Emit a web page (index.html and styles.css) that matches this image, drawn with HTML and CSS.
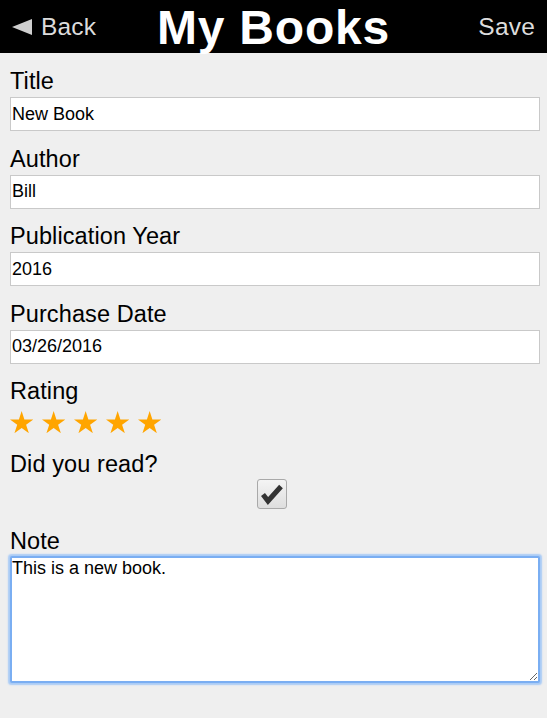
FILE: index.html
```html
<!DOCTYPE html>
<html lang="en">
<head>
<meta charset="utf-8">
<title>My Books</title>
<link rel="stylesheet" href="styles.css">
</head>
<body>
<header class="topbar">
  <div class="nav-left">
    <svg class="back-arrow" width="20" height="16" viewBox="0 0 20 16"><polygon points="0,8 20,0 20,16" fill="#cfcfcf"/></svg>
    <span class="nav-text">Back</span>
  </div>
  <h1 class="title">My Books</h1>
  <div class="nav-right"><span class="nav-text">Save</span></div>
</header>
<main class="form">
  <div class="field">
    <label class="label">Title</label>
    <input class="text-input" type="text" value="New Book">
  </div>
  <div class="field">
    <label class="label">Author</label>
    <input class="text-input" type="text" value="Bill">
  </div>
  <div class="field">
    <label class="label">Publication Year</label>
    <input class="text-input" type="text" value="2016">
  </div>
  <div class="field">
    <label class="label">Purchase Date</label>
    <input class="text-input" type="text" value="03/26/2016">
  </div>
  <div class="field field-rating">
    <label class="label">Rating</label>
    <div class="stars">
      <svg class="star" viewBox="0 0 100 95.1"><path d="M50 0 L61.8 36.33 L100 36.33 L69.1 58.78 L80.9 95.1 L50 72.65 L19.1 95.1 L30.9 58.78 L0 36.33 L38.2 36.33 Z"/></svg>
      <svg class="star" viewBox="0 0 100 95.1"><path d="M50 0 L61.8 36.33 L100 36.33 L69.1 58.78 L80.9 95.1 L50 72.65 L19.1 95.1 L30.9 58.78 L0 36.33 L38.2 36.33 Z"/></svg>
      <svg class="star" viewBox="0 0 100 95.1"><path d="M50 0 L61.8 36.33 L100 36.33 L69.1 58.78 L80.9 95.1 L50 72.65 L19.1 95.1 L30.9 58.78 L0 36.33 L38.2 36.33 Z"/></svg>
      <svg class="star" viewBox="0 0 100 95.1"><path d="M50 0 L61.8 36.33 L100 36.33 L69.1 58.78 L80.9 95.1 L50 72.65 L19.1 95.1 L30.9 58.78 L0 36.33 L38.2 36.33 Z"/></svg>
      <svg class="star" viewBox="0 0 100 95.1"><path d="M50 0 L61.8 36.33 L100 36.33 L69.1 58.78 L80.9 95.1 L50 72.65 L19.1 95.1 L30.9 58.78 L0 36.33 L38.2 36.33 Z"/></svg>
    </div>
  </div>
  <div class="field field-read">
    <label class="label">Did you read?</label>
    <div class="check-row">
      <span class="checkbox" role="checkbox" aria-checked="true">
        <svg width="30" height="30" viewBox="0 0 30 30"><polyline points="6,15.5 11,22 24,7.5" fill="none" stroke="#333" stroke-width="5" stroke-linejoin="miter"/></svg>
      </span>
    </div>
  </div>
  <div class="field field-note">
    <label class="label">Note</label>
    <textarea class="note">This is a new book.</textarea>
  </div>
</main>
</body>
</html>
```
FILE: styles.css
```css
html, body {
  margin: 0;
  padding: 0;
}
body {
  background: #efefef;
  font-family: "Liberation Sans", Arial, sans-serif;
  color: #000;
  width: 547px;
  height: 718px;
  overflow: hidden;
}
.topbar {
  height: 53px;
  background: #000;
  display: grid;
  grid-template-columns: 1fr auto 1fr;
  align-items: start;
  padding: 0 12px;
}
.nav-left {
  display: flex;
  align-items: center;
  height: 53px;
  padding-top: 1px;
  box-sizing: border-box;
}
.back-arrow {
  display: block;
  margin-right: 9px;
  margin-top: -1px;
}
.nav-right {
  display: flex;
  justify-content: flex-end;
  align-items: center;
  height: 53px;
  padding-top: 1px;
  box-sizing: border-box;
}
.nav-text {
  font-size: 24.5px;
  color: #dcdcdc;
  line-height: 28px;
  letter-spacing: 0.2px;
}
.title {
  margin: 0;
  font-size: 48px;
  font-weight: bold;
  color: #fff;
  line-height: 53px;
  padding-top: 1px;
  height: 53px;
  box-sizing: border-box;
  letter-spacing: 0.8px;
  white-space: nowrap;
}
.form {
  padding: 16px 7px 0 10px;
}
.field {
  margin-bottom: 15.6px;
}
.label {
  display: block;
  font-size: 23.5px;
  line-height: 24px;
  padding-bottom: 1px;
  letter-spacing: 0.1px;
}
.text-input {
  display: block;
  box-sizing: border-box;
  width: 100%;
  height: 34px;
  margin: 3px 0 0;
  padding: 0 1px;
  border: 1px solid #c9c9c9;
  border-radius: 0;
  background: #fff;
  font-family: "Liberation Sans", Arial, sans-serif;
  font-size: 18px;
  color: #000;
  outline: none;
}
.field-rating {
  margin-bottom: 18.6px;
}
.stars {
  display: flex;
  gap: 8.7px;
  margin-top: 6.6px;
  height: 22px;
}
.star {
  width: 23.3px;
  height: 22.2px;
  fill: #ffa500;
}
.field-read {
  margin-bottom: 20.5px;
}
.check-row {
  margin-top: 2.4px;
  height: 30px;
  padding-left: 246.5px;
}
.checkbox {
  display: block;
  width: 30px;
  height: 30px;
  box-sizing: border-box;
  border: 1px solid #a9a9a9;
  border-radius: 3px;
  background: linear-gradient(#f4f4f4, #dedede);
  position: relative;
}
.checkbox svg {
  display: block;
  margin: -1px 0 0 -1px;
}
.note {
  display: block;
  box-sizing: border-box;
  width: 100%;
  height: 127px;
  margin: 1.5px 0 0;
  padding: 0;
  border: 2px solid #7aaef2;
  border-radius: 2px;
  box-shadow: 0 0 1.5px 1.5px #a9cbf6;
  background: #fff;
  font-family: "Liberation Sans", Arial, sans-serif;
  font-size: 18px;
  line-height: normal;
  color: #000;
  outline: none;
}
```
